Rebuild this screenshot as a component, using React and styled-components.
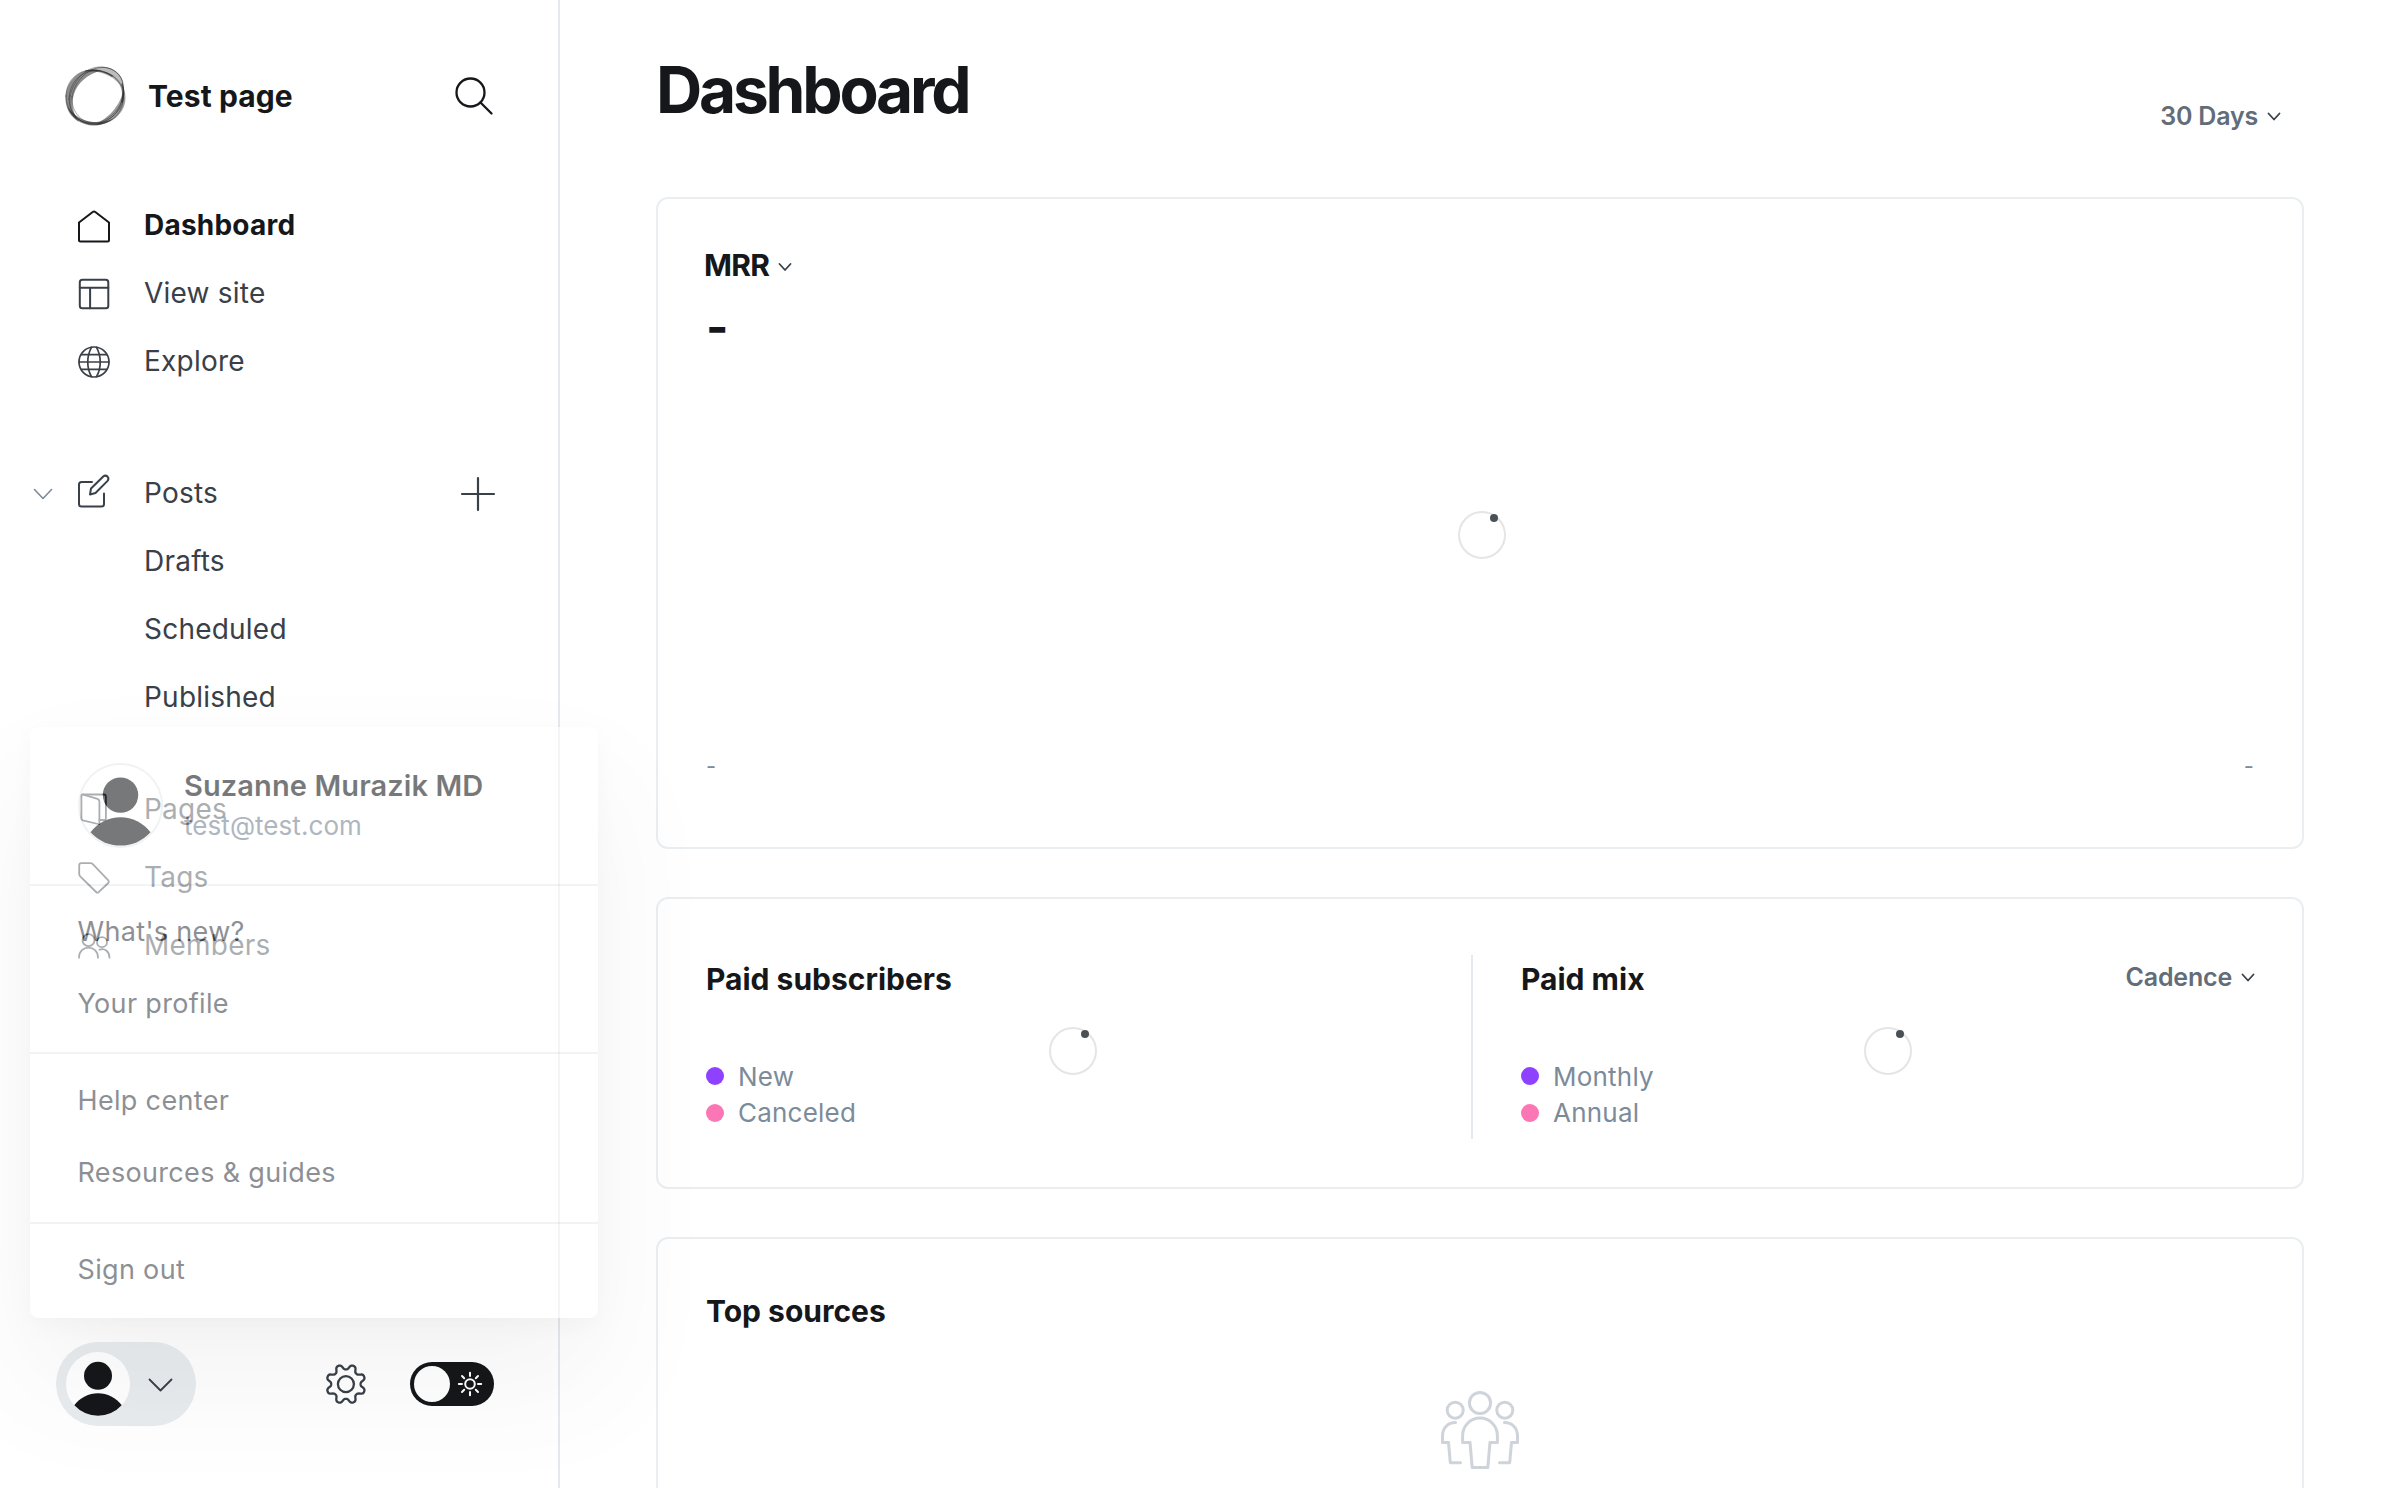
import React from "react";
import styled, { createGlobalStyle } from "styled-components";

const GlobalStyle = createGlobalStyle`
  *, *::before, *::after { box-sizing: border-box; }
  body {
    margin: 0;
    background: #fff;
    color: #15171a;
    font-family: Inter, "Liberation Sans", sans-serif;
    font-size: 28px;
    letter-spacing: 0.22px;
    overflow: hidden;
  }
`;

const Page = styled.div`
  position: relative;
  display: grid;
  grid-template-columns: 560px 1fr;
  height: 1488px;
  overflow: hidden;
`;

/* ---------- Sidebar ---------- */

const Sidebar = styled.aside`
  display: flex;
  flex-direction: column;
  height: 1488px;
  border-right: 2px solid #e5e9ed;
`;

const SiteHeader = styled.header`
  display: flex;
  align-items: center;
  height: 60px;
  margin: 66px 65px 0 65px;
`;

const SiteName = styled.div`
  flex: 1;
  margin-left: 21px;
  font-size: 30px;
  font-weight: 700;
  letter-spacing: 0.1px;
`;

const NavGroup = styled.nav`
  display: flex;
  flex-direction: column;
  margin-top: ${(p) => p.$gap}px;
`;

const NavRow = styled.a`
  display: flex;
  align-items: center;
  height: 68px;
  padding: 0 63px 0 34px;
  color: ${(p) => (p.$active ? "#15171a" : "#394047")};
  font-weight: ${(p) => (p.$active ? 700 : 400)};
`;

const Toggle = styled.span`
  display: flex;
  width: 44px;
`;

const IconSlot = styled.span`
  display: flex;
  width: 66px;
`;

const NavLabel = styled.span`
  flex: 1;
  white-space: nowrap;
`;

const SidebarFooter = styled.footer`
  display: flex;
  align-items: center;
  height: 84px;
  margin: auto 64px 62px 56px;
`;

const UserButton = styled.button`
  display: flex;
  align-items: center;
  gap: 19px;
  width: 140px;
  height: 84px;
  padding: 0 0 0 10px;
  margin-right: auto;
  border: 0;
  border-radius: 42px;
  background: #e8ecef;
`;

const FooterActions = styled.div`
  display: flex;
  align-items: center;
  gap: 44px;
`;

const Switch = styled.div`
  display: flex;
  align-items: center;
  justify-content: space-between;
  width: 84px;
  height: 44px;
  padding: 0 12px 0 4px;
  border-radius: 22px;
  background: #15171a;
`;

const Knob = styled.span`
  width: 36px;
  height: 36px;
  border-radius: 50%;
  background: #fff;
`;

/* ---------- User menu ---------- */

const Menu = styled.div`
  position: absolute;
  left: 30px;
  top: 727px;
  width: 568px;
  height: 591px;
  border-radius: 8px;
  background: #fff;
  opacity: 0.577;
  box-shadow:
    0 0 2px rgba(0, 0, 0, 0.02),
    0 8px 22px rgba(0, 0, 0, 0.045),
    0 62px 116px rgba(0, 0, 0, 0.08);
`;

const MenuHeader = styled.div`
  display: flex;
  align-items: center;
  gap: 21px;
  height: 157px;
  padding: 0 48px;
`;

const MenuAvatar = styled.div`
  display: flex;
  width: 85px;
  height: 85px;
  border: 2px solid #e5e9ed;
  border-radius: 50%;
  background: #fff;
`;

const MenuIdentity = styled.div`
  display: flex;
  flex-direction: column;
  gap: 4px;
  padding-top: 1px;
`;

const MenuName = styled.div`
  font-size: 29px;
  line-height: 36px;
  font-weight: 600;
  letter-spacing: 0.1px;
  white-space: nowrap;
`;

const MenuEmail = styled.div`
  font-size: 26px;
  line-height: 36px;
  letter-spacing: 0.06px;
  color: #738191;
`;

const MenuSection = styled.div`
  display: flex;
  flex-direction: column;
  padding: ${(p) => p.$top}px 0 ${(p) => p.$bottom}px 47.5px;
  border-top: 2px solid #e9ebee;
`;

const MenuItem = styled.a`
  height: 72px;
  line-height: 72px;
  font-size: 27px;
  letter-spacing: 0.33px;
  color: #394047;
`;

/* ---------- Main ---------- */

const Main = styled.main`
  display: flex;
  flex-direction: column;
  gap: 48px;
  padding: 0 96px;
`;

const MainHeader = styled.header`
  display: flex;
  justify-content: space-between;
  height: 149px;
  padding: 50px 24px 0 0;
`;

const Title = styled.h1`
  margin: 0;
  font-size: 64px;
  line-height: 80px;
  font-weight: 700;
  letter-spacing: -3.2px;
`;

const Picker = styled.div`
  display: flex;
  align-items: center;
  gap: 10px;
  height: 36px;
  margin-top: ${(p) => p.$top || 0}px;
  font-size: 25px;
  font-weight: 600;
  letter-spacing: -0.2px;
  color: #626d79;
`;

const Card = styled.section`
  display: flex;
  flex-direction: ${(p) => p.$direction || "column"};
  flex: none;
  width: 1648px;
  height: ${(p) => p.$height}px;
  border: 2px solid #ebeef0;
  border-radius: 12px;
`;

const MrrHeader = styled.div`
  display: flex;
  align-items: center;
  gap: 10px;
  height: 40px;
  margin: 46px 0 0 46px;
`;

const CardTitle = styled.h3`
  margin: 0;
  font-size: 30px;
  line-height: 40px;
  font-weight: 700;
  letter-spacing: ${(p) => p.$spacing || 0}px;
`;

const MrrValue = styled.div`
  margin-left: 48px;
  font-size: 48px;
  line-height: 60px;
  margin-top: 12px;
  font-weight: 700;
`;

const ChartArea = styled.div`
  display: flex;
  flex-direction: column;
  flex: 1;
  padding: 154px 48px 61px 48px;
`;

const AxisLabels = styled.div`
  display: flex;
  justify-content: space-between;
  margin-top: auto;
  font-size: 22px;
  line-height: 40px;
  color: #7c8b9a;
`;

const Spinner = styled.div`
  align-self: center;
  flex: none;
  width: 48px;
  height: 48px;
  margin-top: ${(p) => p.$top || 0}px;
  margin-left: ${(p) => p.$left || 0}px;
  padding: 1px 0 0 30px;
  border: 2px solid #e5e5e5;
  border-radius: 50%;
  &::before {
    content: "";
    display: block;
    width: 8px;
    height: 8px;
    border-radius: 50%;
    background: #4a5156;
  }
`;

const HalfPanel = styled.div`
  display: grid;
  grid-template-columns: 1fr 48px 1fr;
  width: ${(p) => p.$width}px;
  height: 184px;
  margin: 56px 0 0 48px;
  padding-right: ${(p) => p.$right || 0}px;
  border-right: ${(p) => (p.$divided ? "2px solid #e5e9ed" : "0")};
`;

const PanelText = styled.div`
  display: flex;
  flex-direction: column;
  padding-top: 4px;
`;

const Legend = styled.ul`
  margin: 59px 0 0;
  padding: 0;
  list-style: none;
`;

const LegendItem = styled.li`
  display: flex;
  align-items: center;
  gap: 14px;
  height: 36.5px;
  font-size: 26px;
  color: #7c8b9a;
  &::before {
    content: "";
    width: 18px;
    height: 18px;
    border-radius: 50%;
    background: ${(p) => p.$color};
  }
`;

const PanelAction = styled.div`
  display: flex;
  justify-content: flex-end;
  padding-top: 4px;
`;

const SourcesBody = styled.div`
  display: flex;
  flex-direction: column;
  align-items: stretch;
  padding: 52px 48px;
  gap: 59px;
`;

const Centered = styled.div`
  display: flex;
  justify-content: center;
`;

/* ---------- Icons ---------- */

const Svg = styled.svg`
  display: block;
  flex: none;
  overflow: visible;
  fill: none;
  stroke: ${(p) => p.$stroke || "currentColor"};
  stroke-width: ${(p) => p.$weight || 2};
  stroke-linecap: round;
  stroke-linejoin: round;
`;

const Chevron = ({ w = 12, h = 7, drop = 0, color = "#394047", weight = 1.8 }) => (
  <Svg width={w} height={h} viewBox={`0 ${-drop} ${w} ${h}`} $stroke={color} $weight={weight}>
    <path d={`M0.5 0.5 L${w / 2} ${h - 0.5} L${w - 0.5} 0.5`} />
  </Svg>
);

const SearchIcon = () => (
  <Svg width="38" height="38" viewBox="0 0 38 38" $stroke="#15171a" $weight="2.3">
    <circle cx="15.5" cy="15.5" r="14" />
    <path d="M25.5 25.5 L36.5 36.5" />
  </Svg>
);

const HomeIcon = () => (
  <Svg width="32" height="32" viewBox="0 -1.5 32 32">
    <path d="M1 12 L14.7 1.5 Q16 0.6 17.3 1.5 L31 12 V29.5 Q31 31 29.5 31 H2.5 Q1 31 1 29.5 Z" />
  </Svg>
);

const LayoutIcon = () => (
  <Svg width="32" height="32" viewBox="0.2 -0.7 32 32">
    <rect x="2" y="2" width="28.5" height="28.5" rx="2.5" />
    <path d="M2 10 H30.5 M12.3 10 V30.5" />
  </Svg>
);

const GlobeIcon = () => (
  <Svg width="32" height="32" viewBox="0 -1 32 32" $weight="1.7">
    <circle cx="16" cy="16" r="15" />
    <path d="M1 16 H31 M3.5 8.7 H28.5 M3.5 23.3 H28.5" />
    <path d="M13.5 1.3 C8.5 10 8.5 22 13.5 30.7 M18.5 1.3 C23.5 10 23.5 22 18.5 30.7" />
  </Svg>
);

const EditIcon = () => (
  <Svg width="32" height="34" viewBox="0 2 32 34">
    <path d="M14 8 H3.5 Q1 8 1 10.5 V30 Q1 32.5 3.5 32.5 H23.5 Q26 32.5 26 30 V19.5" />
    <path d="M12 20.5 L13 14.5 L25.5 2.3 Q27.5 0.8 29.5 2.6 Q31.2 4.5 29.8 6.6 L17.5 19 Z" />
  </Svg>
);

const PlusIcon = () => (
  <Svg width="34" height="34" viewBox="0 -1 34 34" $weight="2.2">
    <path d="M17 1 V33 M1 17 H33" />
  </Svg>
);

const PagesIcon = () => (
  <Svg width="32" height="32" viewBox="0.6 0 32 32" $weight="1.8">
    <path d="M5 1.5 H26.5 Q28.5 1.5 28.5 3.5 V25.5 Q28.5 27 27 27 H22" />
    <path d="M4 3 Q4 1.2 6 1.7 L20 5.8 Q22 6.5 22 8.5 V30 Q22 31.4 20.5 31 L5.5 27.3 Q4 26.8 4 25.3 Z" />
  </Svg>
);

const TagIcon = () => (
  <Svg width="32" height="32" viewBox="0 -0.7 32 32" $weight="1.8">
    <path d="M3.5 1.5 H12.5 Q13.8 1.5 14.8 2.5 L30.3 18.6 Q31.5 20 30.3 21.3 L20.6 30.5 Q19.3 31.5 18.1 30.3 L2.2 14.6 Q1.2 13.5 1.2 12.3 V3.7 Q1.2 1.5 3.5 1.5 Z" />
  </Svg>
);

const MembersIcon = () => (
  <Svg width="32" height="32" viewBox="0 -0.7 32 32" $weight="1.8">
    <circle cx="10.5" cy="10.5" r="6" />
    <circle cx="24" cy="12.5" r="5" />
    <path d="M1 28 C1 14.5 20 14.5 20 28 M21.5 20 C27 18 31.5 22 31.5 28" />
  </Svg>
);

const gearPath = (() => {
  const steps = 160;
  const points = Array.from({ length: steps }, (_, i) => {
    const a = (i / steps) * Math.PI * 2;
    const wave = Math.tanh(1.5 * Math.cos(8 * (a - Math.PI / 8))) / Math.tanh(1.5);
    const r = 17.2 + 2.5 * wave;
    return `${(20.5 + r * Math.cos(a)).toFixed(2)} ${(20.5 + r * Math.sin(a)).toFixed(2)}`;
  });
  return `M${points.join("L")}Z`;
})();

const GearIcon = () => (
  <Svg width="41" height="41" viewBox="-0.4 0.4 41 41" $stroke="#394047" $weight="2.3">
    <path d={gearPath} />
    <circle cx="20.5" cy="20.5" r="8" />
  </Svg>
);

const SunIcon = () => (
  <Svg width="24" height="24" viewBox="0 0 24 24" $stroke="#fff">
    <circle cx="12" cy="12" r="4.8" />
    <path d="M12 0.8V4 M12 20V23.2 M0.8 12H4 M20 12H23.2 M4 4L6.2 6.2 M17.8 17.8L20 20 M20 4L17.8 6.2 M6.2 17.8L4 20" />
  </Svg>
);

const Avatar = ({ size }) => (
  <svg width={size} height={size} viewBox="0 0 64 64">
    <circle cx="32" cy="32" r="32" fill="#fff" />
    <circle cx="32" cy="23.8" r="14" fill="#15171a" />
    <path d="M8.3 53.2 A29.5 29.5 0 0 1 55.7 53.2 A32 32 0 0 1 8.3 53.2 Z" fill="#15171a" />
  </svg>
);

const SiteLogo = () => (
  <Svg width="62" height="60" viewBox="0 0 62 60" $stroke="#222" $weight="0.8">
    <g fill="#222" stroke="none">
      <path fillOpacity="0.52" d="M36 4.5 C15 0 0.5 15 0.5 33 C0.5 43 6 51 14 56 C7.5 46 6 38 9 28 C12.5 17 22 8.5 36 4.5 Z" />
      <path fillOpacity="0.3" d="M23 5 C32 0 41 -0.5 48 3.5 C57 9 58.5 15 58.5 25 C56 18 50 13.5 44 10 C37 6.5 30 5 23 5 Z" />
      <path fillOpacity="0.45" d="M58 20 C62 30 61 39 56 46 C50 55 40 58.5 30 59 C38 54 45 49.5 49.5 43 C55 36 58 29 58 20 Z" />
      <path fillOpacity="0.6" d="M2 40 C6 52 17 60 30 59.5 C38 59 44 56 48 53 C40 56 34 56.5 28 56 C16 54.5 8 49 2 40 Z" />
    </g>
    <g strokeOpacity="0.5">
      <path d="M1 30 C1 14 14 2.5 31 4 C45 5 57 15 57.5 28 C58 43 45 57.5 29 58 C14 58 1 46 1 30 Z" />
      <path d="M4 33 C4 18 15 5 30 5 C40 5 52 9 56.5 20 C60.5 31 58 44 50 51 C42 58 32 59.5 24 58 C12 55 4 45 4 33 Z" />
      <path d="M7 31 C9 18 18 7 29 3 C40 -1 52 3 56 12 C59 18 58 24 58.5 30 C58 43 47 55 32 57 C17 58.5 6 46 7 31 Z" />
      <path d="M5 30 C8 16 18 4 30 1.5 C42 -1 54 5 57.5 15 C60 28 57 41 47 49 C38 57 24 60 14 54 C6 48 4 40 5 30 Z" />
    </g>
    <path d="M21 5 C31 3 41 6 47 10" strokeOpacity="0.6" strokeWidth="1.6" />
    <path d="M57 18 C59.5 25 59 30 57 36" strokeOpacity="0.6" strokeWidth="1.6" />
  </Svg>
);

const PeopleIcon = () => (
  <Svg width="80" height="80" viewBox="0 0 80 80" $stroke="#ced4d9" $weight="3">
    <circle cx="40" cy="13" r="10.6" />
    <circle cx="15.2" cy="20.2" r="8" />
    <circle cx="64.8" cy="20.2" r="8" />
    <path d="M22.6 52.5 V45.5 A17.4 17.4 0 0 1 57.4 45.5 V52.5 H50 L47.8 77.5 H32.2 L30 52.5 Z" />
    <path d="M15.5 32.5 C8 32.5 2.5 38 2.5 46 V52.5 H8.5 L10.3 72.7 H20.5" />
    <path d="M64.5 32.5 C72 32.5 77.5 38 77.5 46 V52.5 H71.5 L69.7 72.7 H59.5" />
  </Svg>
);

/* ---------- Composition ---------- */

const NavItem = ({ icon, label, active, expanded, action }) => (
  <NavRow $active={active}>
    <Toggle>{expanded && <Chevron w={18} h={10} drop={1} color="#7c8b9a" weight={1.6} />}</Toggle>
    <IconSlot>{icon}</IconSlot>
    <NavLabel>{label}</NavLabel>
    {action}
  </NavRow>
);

const StatPanel = ({ title, legend, action, ...layout }) => (
  <HalfPanel {...layout}>
    <PanelText>
      <CardTitle>{title}</CardTitle>
      <Legend>
        <LegendItem $color="#8e42ff">{legend[0]}</LegendItem>
        <LegendItem $color="#fb76b4">{legend[1]}</LegendItem>
      </Legend>
    </PanelText>
    <Spinner $top={8} />
    <PanelAction>{action}</PanelAction>
  </HalfPanel>
);

export default function App() {
  return (
    <Page>
      <GlobalStyle />
      <Sidebar>
        <SiteHeader>
          <SiteLogo />
          <SiteName>Test page</SiteName>
          <SearchIcon />
        </SiteHeader>
        <NavGroup $gap={65}>
          <NavItem icon={<HomeIcon />} label="Dashboard" active />
          <NavItem icon={<LayoutIcon />} label="View site" />
          <NavItem icon={<GlobeIcon />} label="Explore" />
        </NavGroup>
        <NavGroup $gap={64}>
          <NavItem icon={<EditIcon />} label="Posts" expanded action={<PlusIcon />} />
          <NavItem label="Drafts" />
          <NavItem label="Scheduled" />
          <NavItem label="Published" />
        </NavGroup>
        <NavGroup $gap={44}>
          <NavItem icon={<PagesIcon />} label="Pages" />
          <NavItem icon={<TagIcon />} label="Tags" />
          <NavItem icon={<MembersIcon />} label="Members" />
        </NavGroup>
        <SidebarFooter>
          <UserButton>
            <Avatar size={64} />
            <Chevron w={23} h={12} drop={1} />
          </UserButton>
          <FooterActions>
            <GearIcon />
            <Switch>
              <Knob />
              <SunIcon />
            </Switch>
          </FooterActions>
        </SidebarFooter>
      </Sidebar>

      <Main>
        <MainHeader>
          <Title>Dashboard</Title>
          <Picker $top={48}>
            30 Days
            <Chevron />
          </Picker>
        </MainHeader>

        <Card $height={652}>
          <MrrHeader>
            <CardTitle $spacing={-0.7}>MRR</CardTitle>
            <Chevron drop={1.5} />
          </MrrHeader>
          <MrrValue>-</MrrValue>
          <ChartArea>
            <Spinner $left={4} />
            <AxisLabels>
              <span>-</span>
              <span>-</span>
            </AxisLabels>
          </ChartArea>
        </Card>

        <Card $height={292} $direction="row">
          <StatPanel
            title="Paid subscribers"
            legend={["New", "Canceled"]}
            $width={767}
            $right={31}
            $divided
          />
          <StatPanel
            title="Paid mix"
            legend={["Monthly", "Annual"]}
            $width={733}
            action={
              <Picker>
                Cadence
                <Chevron />
              </Picker>
            }
          />
        </Card>

        <Card $height={400}>
          <SourcesBody>
            <CardTitle>Top sources</CardTitle>
            <Centered>
              <PeopleIcon />
            </Centered>
          </SourcesBody>
        </Card>
      </Main>

      <Menu>
        <MenuHeader>
          <MenuAvatar>
            <Avatar size={81} />
          </MenuAvatar>
          <MenuIdentity>
            <MenuName>Suzanne Murazik MD</MenuName>
            <MenuEmail>test@test.com</MenuEmail>
          </MenuIdentity>
        </MenuHeader>
        <MenuSection $top={10} $bottom={12}>
          <MenuItem>What's new?</MenuItem>
          <MenuItem>Your profile</MenuItem>
        </MenuSection>
        <MenuSection $top={11} $bottom={13}>
          <MenuItem>Help center</MenuItem>
          <MenuItem>Resources &amp; guides</MenuItem>
        </MenuSection>
        <MenuSection $top={10} $bottom={0}>
          <MenuItem>Sign out</MenuItem>
        </MenuSection>
      </Menu>
    </Page>
  );
}
